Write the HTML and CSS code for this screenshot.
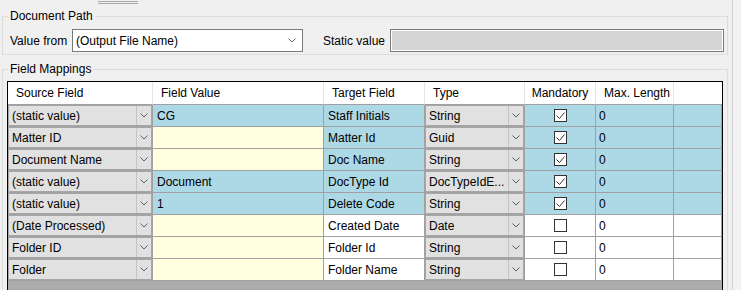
FILE: index.html
```html
<!DOCTYPE html>
<html lang="en">

<head>
    <meta charset="UTF-8">
    <meta name="viewport" content="width=device-width, initial-scale=1.0">
    <title>Field Mappings</title>
    <link rel="stylesheet" href="styles.css">
</head>

<body>
    <div class="page">
        <div class="main">
            <div class="grip"></div>

            <!-- Document Path -->
            <fieldset class="group group-path">
                <legend>Document Path</legend>
                <div class="path-row">
                    <span class="lbl">Value from</span>
                    <div class="combo">
                        <span class="combo-text">(Output File Name)</span>
                        <svg class="chev" width="8" height="5" viewBox="0 0 8 5"><polyline points="0.5,0.5 4,4 7.5,0.5" /></svg>
                    </div>
                    <span class="lbl lbl-static">Static value</span>
                    <div class="textbox"></div>
                </div>
            </fieldset>

            <!-- Field Mappings -->
            <fieldset class="group group-map">
                <legend>Field Mappings</legend>
                <div class="grid">
                    <div class="row head">
                        <div class="hc">Source Field</div>
                        <div class="hc">Field Value</div>
                        <div class="hc">Target Field</div>
                        <div class="hc">Type</div>
                        <div class="hc hc-center">Mandatory</div>
                        <div class="hc">Max. Length</div>
                        <div class="hc hc-last"></div>
                    </div>

                    <div class="row blue">
                        <div class="c cbc"><div class="cb"><span class="cb-text">(static value)</span><span class="cb-btn"><svg class="chev" width="8" height="5" viewBox="0 0 8 5"><polyline points="0.5,0.5 4,4 7.5,0.5" /></svg></span></div></div>
                        <div class="c val">CG</div>
                        <div class="c">Staff Initials</div>
                        <div class="c cbc"><div class="cb"><span class="cb-text">String</span><span class="cb-btn"><svg class="chev" width="8" height="5" viewBox="0 0 8 5"><polyline points="0.5,0.5 4,4 7.5,0.5" /></svg></span></div></div>
                        <div class="c chk"><span class="box"><svg width="11" height="11" viewBox="0 0 11 11"><polyline points="1.5,5.5 4.5,8.5 9.5,2.5" /></svg></span></div>
                        <div class="c num">0</div>
                        <div class="c last"></div>
                    </div>

                    <div class="row blue">
                        <div class="c cbc"><div class="cb"><span class="cb-text">Matter ID</span><span class="cb-btn"><svg class="chev" width="8" height="5" viewBox="0 0 8 5"><polyline points="0.5,0.5 4,4 7.5,0.5" /></svg></span></div></div>
                        <div class="c yellow"></div>
                        <div class="c">Matter Id</div>
                        <div class="c cbc"><div class="cb"><span class="cb-text">Guid</span><span class="cb-btn"><svg class="chev" width="8" height="5" viewBox="0 0 8 5"><polyline points="0.5,0.5 4,4 7.5,0.5" /></svg></span></div></div>
                        <div class="c chk"><span class="box"><svg width="11" height="11" viewBox="0 0 11 11"><polyline points="1.5,5.5 4.5,8.5 9.5,2.5" /></svg></span></div>
                        <div class="c num">0</div>
                        <div class="c last"></div>
                    </div>

                    <div class="row blue">
                        <div class="c cbc"><div class="cb"><span class="cb-text">Document Name</span><span class="cb-btn"><svg class="chev" width="8" height="5" viewBox="0 0 8 5"><polyline points="0.5,0.5 4,4 7.5,0.5" /></svg></span></div></div>
                        <div class="c yellow"></div>
                        <div class="c">Doc Name</div>
                        <div class="c cbc"><div class="cb"><span class="cb-text">String</span><span class="cb-btn"><svg class="chev" width="8" height="5" viewBox="0 0 8 5"><polyline points="0.5,0.5 4,4 7.5,0.5" /></svg></span></div></div>
                        <div class="c chk"><span class="box"><svg width="11" height="11" viewBox="0 0 11 11"><polyline points="1.5,5.5 4.5,8.5 9.5,2.5" /></svg></span></div>
                        <div class="c num">0</div>
                        <div class="c last"></div>
                    </div>

                    <div class="row blue">
                        <div class="c cbc"><div class="cb"><span class="cb-text">(static value)</span><span class="cb-btn"><svg class="chev" width="8" height="5" viewBox="0 0 8 5"><polyline points="0.5,0.5 4,4 7.5,0.5" /></svg></span></div></div>
                        <div class="c val">Document</div>
                        <div class="c">DocType Id</div>
                        <div class="c cbc"><div class="cb"><span class="cb-text">DocTypeIdE...</span><span class="cb-btn"><svg class="chev" width="8" height="5" viewBox="0 0 8 5"><polyline points="0.5,0.5 4,4 7.5,0.5" /></svg></span></div></div>
                        <div class="c chk"><span class="box"><svg width="11" height="11" viewBox="0 0 11 11"><polyline points="1.5,5.5 4.5,8.5 9.5,2.5" /></svg></span></div>
                        <div class="c num">0</div>
                        <div class="c last"></div>
                    </div>

                    <div class="row blue">
                        <div class="c cbc"><div class="cb"><span class="cb-text">(static value)</span><span class="cb-btn"><svg class="chev" width="8" height="5" viewBox="0 0 8 5"><polyline points="0.5,0.5 4,4 7.5,0.5" /></svg></span></div></div>
                        <div class="c val">1</div>
                        <div class="c">Delete Code</div>
                        <div class="c cbc"><div class="cb"><span class="cb-text">String</span><span class="cb-btn"><svg class="chev" width="8" height="5" viewBox="0 0 8 5"><polyline points="0.5,0.5 4,4 7.5,0.5" /></svg></span></div></div>
                        <div class="c chk"><span class="box"><svg width="11" height="11" viewBox="0 0 11 11"><polyline points="1.5,5.5 4.5,8.5 9.5,2.5" /></svg></span></div>
                        <div class="c num">0</div>
                        <div class="c last"></div>
                    </div>

                    <div class="row">
                        <div class="c cbc"><div class="cb"><span class="cb-text">(Date Processed)</span><span class="cb-btn"><svg class="chev" width="8" height="5" viewBox="0 0 8 5"><polyline points="0.5,0.5 4,4 7.5,0.5" /></svg></span></div></div>
                        <div class="c yellow"></div>
                        <div class="c">Created Date</div>
                        <div class="c cbc"><div class="cb"><span class="cb-text">Date</span><span class="cb-btn"><svg class="chev" width="8" height="5" viewBox="0 0 8 5"><polyline points="0.5,0.5 4,4 7.5,0.5" /></svg></span></div></div>
                        <div class="c chk"><span class="box"></span></div>
                        <div class="c num">0</div>
                        <div class="c last"></div>
                    </div>

                    <div class="row">
                        <div class="c cbc"><div class="cb"><span class="cb-text">Folder ID</span><span class="cb-btn"><svg class="chev" width="8" height="5" viewBox="0 0 8 5"><polyline points="0.5,0.5 4,4 7.5,0.5" /></svg></span></div></div>
                        <div class="c yellow"></div>
                        <div class="c">Folder Id</div>
                        <div class="c cbc"><div class="cb"><span class="cb-text">String</span><span class="cb-btn"><svg class="chev" width="8" height="5" viewBox="0 0 8 5"><polyline points="0.5,0.5 4,4 7.5,0.5" /></svg></span></div></div>
                        <div class="c chk"><span class="box"></span></div>
                        <div class="c num">0</div>
                        <div class="c last"></div>
                    </div>

                    <div class="row">
                        <div class="c cbc"><div class="cb"><span class="cb-text">Folder</span><span class="cb-btn"><svg class="chev" width="8" height="5" viewBox="0 0 8 5"><polyline points="0.5,0.5 4,4 7.5,0.5" /></svg></span></div></div>
                        <div class="c yellow"></div>
                        <div class="c">Folder Name</div>
                        <div class="c cbc"><div class="cb"><span class="cb-text">String</span><span class="cb-btn"><svg class="chev" width="8" height="5" viewBox="0 0 8 5"><polyline points="0.5,0.5 4,4 7.5,0.5" /></svg></span></div></div>
                        <div class="c chk"><span class="box"></span></div>
                        <div class="c num">0</div>
                        <div class="c last"></div>
                    </div>

                    <div class="grid-empty"></div>
                </div>
            </fieldset>
        </div>
        <div class="edge"></div>
    </div>
</body>

</html>
```

FILE: styles.css
```css
/* reset */
* {
    margin: 0;
    padding: 0;
    box-sizing: border-box;
}

body {
    background: #f0f0f0;
    font-family: "Liberation Sans", Arial, sans-serif;
    font-size: 12px;
    color: #000;
    height: 290px;
    overflow: hidden;
}

.page {
    display: flex;
    height: 290px;
}

.main {
    width: 732px;
    flex: none;
}

/* right panel edge */
.edge {
    flex: 1;
    border-left: 1px solid #d4d4d4;
    background: #f2f2f2;
}

/* splitter grip at the top */
.grip {
    margin: 1px 0 0 98px;
    width: 40px;
    height: 3px;
    border-top: 1px solid #a9a9a9;
    border-bottom: 1px solid #a9a9a9;
}

/* group boxes */
.group {
    width: 726px;
    margin-left: 2px;
    border: 1px solid #dcdcdc;
    min-width: 0;
}

.group legend {
    padding: 0 2px;
    line-height: 16px;
    font-size: 12px;
}

.group-path {
    margin-top: 4px;
    padding: 5px 3px 2px 7px;
}

.group-path legend {
    margin-left: -2px;
}

.group-map {
    margin-top: 6px;
    padding: 4px 4px 0 4px;
}

.group-map legend {
    margin-left: 1px;
}

/* Document Path row */
.path-row {
    display: flex;
    align-items: center;
    height: 23px;
}

.lbl {
    width: 62px;
    flex: none;
    white-space: nowrap;
}

.lbl-static {
    margin-left: 20px;
    width: 67px;
}

.combo {
    width: 231px;
    height: 23px;
    flex: none;
    border: 1px solid #7a7a7a;
    background: #fff;
    display: flex;
    align-items: center;
    padding-left: 3px;
}

.combo-text {
    flex: 1;
}

.combo .chev {
    margin-right: 6px;
}

.chev {
    display: block;
    fill: none;
    stroke: #5f5f5f;
    stroke-width: 1;
}

.textbox {
    flex: 1;
    height: 23px;
    border: 1px solid #7a7a7a;
    background: #d4d4d4;
    box-shadow: inset 0 0 0 1px #fff;
}

/* data grid */
.grid {
    width: 716px;
    border: 1px solid #000;
    border-bottom: none;
    background: #ababab;
}

.row {
    display: grid;
    grid-template-columns: 145px 171px 101px 100px 71px 78px 1fr;
    height: 22px;
    background: #fff;
}

.row.head {
    height: 23px;
}

.hc {
    display: flex;
    align-items: center;
    padding-left: 8px;
    border-right: 1px solid #e5e5e5;
    border-bottom: 1px solid #a0a0a0;
    white-space: nowrap;
}

.hc-center {
    justify-content: center;
    padding-left: 0;
}

.hc-last,
.last {
    border-right: none;
}

.c {
    display: flex;
    align-items: center;
    padding-left: 4px;
    border-right: 1px solid #a0a0a0;
    border-bottom: 1px solid #a0a0a0;
    white-space: nowrap;
    overflow: hidden;
}

.row.blue .c {
    background: #add8e6;
}

.row .c.yellow {
    background: #ffffe0;
}

.c.num {
    padding-left: 3px;
}

/* combo cells inside the grid */
.c.cbc {
    padding: 0;
    align-items: stretch;
}

.cb {
    flex: 1;
    display: flex;
    border: 1px solid #a6a6a6;
    background: #e1e1e1;
}

.cb-text {
    flex: 1;
    display: flex;
    align-items: center;
    padding-left: 3px;
    overflow: hidden;
}

.cb-btn {
    width: 15px;
    flex: none;
    border-left: 1px solid #c4c4c4;
    display: flex;
    align-items: center;
    justify-content: center;
}

/* check boxes */
.c.chk {
    justify-content: center;
    padding-left: 0;
}

.box {
    width: 13px;
    height: 13px;
    border: 1px solid #333;
    background: #fff;
    display: block;
}

.box svg {
    display: block;
    fill: none;
    stroke: #333;
    stroke-width: 1;
}

.grid-empty {
    height: 30px;
}
```
